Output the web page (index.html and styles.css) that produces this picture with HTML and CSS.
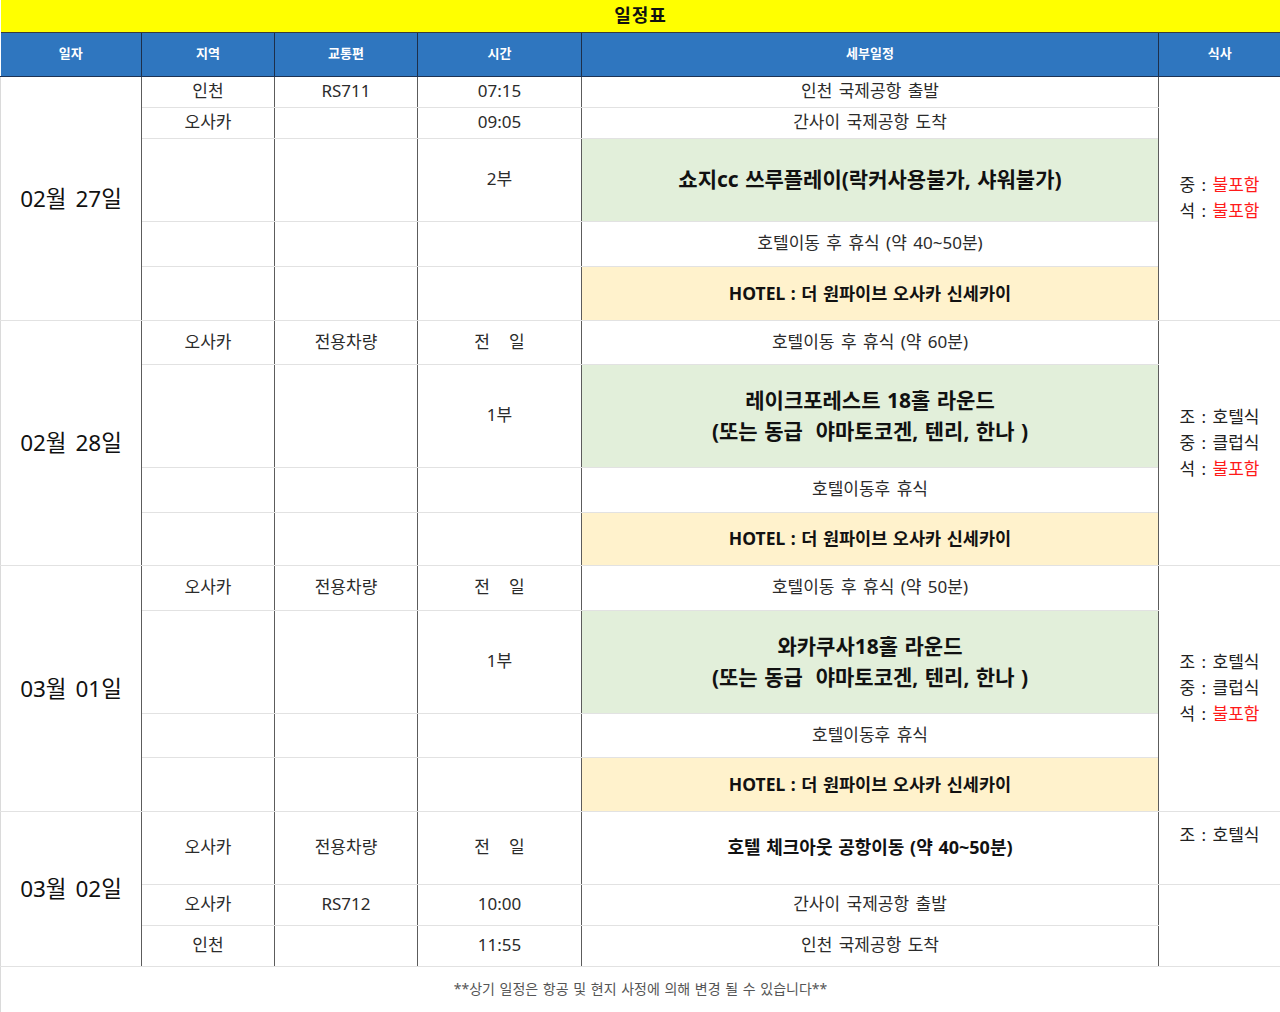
FILE: index.html
```html
<!DOCTYPE html>
<html lang="ko">
<head>
<meta charset="utf-8">
<title>일정표</title>
<link rel="stylesheet" href="styles.css">
</head>
<body>
<table class="sched">
  <colgroup>
    <col class="w-date"><col class="w-region"><col class="w-trans"><col class="w-time"><col class="w-detail"><col class="w-meal">
  </colgroup>
  <thead>
    <tr class="h-title"><th colspan="6" class="title">일정표</th></tr>
    <tr class="h-head">
      <th>일자</th><th>지역</th><th>교통편</th><th>시간</th><th>세부일정</th><th>식사</th>
    </tr>
  </thead>
  <tbody>
    <!-- 02/27 -->
    <tr class="blk h31">
      <td rowspan="5" class="date">02월 27일</td>
      <td>인천</td><td>RS711</td><td>07:15</td><td>인천 국제공항 출발</td>
      <td rowspan="5" class="meal">중 : <span class="red">불포함</span><br>석 : <span class="red">불포함</span></td>
    </tr>
    <tr class="h31"><td>오사카</td><td></td><td>09:05</td><td>간사이 국제공항 도착</td></tr>
    <tr class="h83"><td></td><td></td><td>2부</td><td class="green big">쇼지cc 쓰루플레이(락커사용불가, 샤워불가)</td></tr>
    <tr class="h45"><td></td><td></td><td></td><td>호텔이동 후 휴식 (약 40~50분)</td></tr>
    <tr class="h54"><td></td><td></td><td></td><td class="cream strong">HOTEL : 더 원파이브 오사카 신세카이</td></tr>

    <!-- 02/28 -->
    <tr class="blk h44">
      <td rowspan="4" class="date">02월 28일</td>
      <td>오사카</td><td>전용차량</td><td>전&nbsp;&nbsp;&nbsp;일</td><td>호텔이동 후 휴식 (약 60분)</td>
      <td rowspan="4" class="meal">조 : 호텔식<br>중 : 클럽식<br>석 : <span class="red">불포함</span></td>
    </tr>
    <tr class="h103"><td></td><td></td><td>1부</td><td class="green big two">레이크포레스트 18홀 라운드<br>(또는 동급&nbsp; 야마토코겐, 텐리, 한나 )</td></tr>
    <tr class="h45"><td></td><td></td><td></td><td>호텔이동후 휴식</td></tr>
    <tr class="h53"><td></td><td></td><td></td><td class="cream strong">HOTEL : 더 원파이브 오사카 신세카이</td></tr>

    <!-- 03/01 -->
    <tr class="blk h45">
      <td rowspan="4" class="date">03월 01일</td>
      <td>오사카</td><td>전용차량</td><td>전&nbsp;&nbsp;&nbsp;일</td><td>호텔이동 후 휴식 (약 50분)</td>
      <td rowspan="4" class="meal">조 : 호텔식<br>중 : 클럽식<br>석 : <span class="red">불포함</span></td>
    </tr>
    <tr class="h103"><td></td><td></td><td>1부</td><td class="green big two">와카쿠사18홀 라운드<br>(또는 동급&nbsp; 야마토코겐, 텐리, 한나 )</td></tr>
    <tr class="h44"><td></td><td></td><td></td><td>호텔이동후 휴식</td></tr>
    <tr class="h54"><td></td><td></td><td></td><td class="cream strong">HOTEL : 더 원파이브 오사카 신세카이</td></tr>

    <!-- 03/02 -->
    <tr class="blk h73">
      <td rowspan="3" class="date">03월 02일</td>
      <td>오사카</td><td>전용차량</td><td>전&nbsp;&nbsp;&nbsp;일</td><td class="strong lg">호텔 체크아웃 공항이동 (약 40~50분)</td>
      <td class="meal top">조 : 호텔식</td>
    </tr>
    <tr class="h41"><td>오사카</td><td>RS712</td><td>10:00</td><td>간사이 국제공항 출발</td><td rowspan="2" class="meal"></td></tr>
    <tr class="h41"><td>인천</td><td></td><td>11:55</td><td>인천 국제공항 도착</td></tr>

    <tr class="blk h46"><td colspan="6" class="note">**상기 일정은 항공 및 현지 사정에 의해 변경 될 수 있습니다**</td></tr>
  </tbody>
</table>
</body>
</html>
```

FILE: styles.css
```css
html, body {
  margin: 0;
  padding: 0;
  background: #ffffff;
}

body {
  font-family: "Noto Sans", "Noto Sans CJK KR", sans-serif;
  color: #2b2b2b;
}

.sched {
  width: 1280px;
  table-layout: fixed;
  border-collapse: collapse;
  font-size: 17px;
  word-spacing: 2px;
}

.w-date { width: 141px; }
.w-region { width: 133px; }
.w-trans { width: 143px; }
.w-time { width: 164px; }
.w-detail { width: 577px; }
.w-meal { width: 122px; }

.sched th,
.sched td {
  padding: 0;
  text-align: center;
  vertical-align: middle;
  line-height: 1.2;
}

.sched td {
  border-top: 1px solid #e2e2e2;
  border-bottom: 1px solid #e2e2e2;
  border-left: 1px solid #5c5c5c;
  border-right: 1px solid #5c5c5c;
}

.sched td.date {
  border-left: 1px solid #dadada;
}

.h-title { height: 32px; }
.sched th.title {
  background: #ffff00;
  font-size: 18px;
  font-weight: 700;
  color: #111;
  letter-spacing: 1px;
  border-bottom: 1px solid #3a3a3a;
}

.h-head { height: 44px; }
.h-head th {
  background: #2f76bf;
  color: #ffffff;
  font-size: 13px;
  font-weight: 700;
  border-left: 1px solid #1d2f4a;
  border-right: 1px solid #1d2f4a;
  border-bottom: 1px solid #1d3355;
}
.h-head th:first-child { border-left: none; }
.h-head th:last-child { border-right: none; }

.sched tr.blk > td {
  border-top: 1px solid #555555;
}

.h31 { height: 31px; }
.h41 { height: 41px; }
.h44 { height: 44px; }
.h45 { height: 45px; }
.h46 { height: 46px; }
.h53 { height: 53px; }
.h54 { height: 54px; }
.h73 { height: 73px; }
.h83 { height: 83px; }
.h103 { height: 103px; }

.sched td.date {
  font-size: 22.5px;
  color: #111;
  word-spacing: 3px;
}

.green { background: #e2efda; }
.cream { background: #fff2cc; }

.sched td.big {
  font-size: 21px;
  font-weight: 700;
  color: #111;
  word-spacing: 1px;
}
.sched td.big.two { line-height: 31px; }

.sched td.strong {
  font-size: 17.5px;
  font-weight: 700;
  color: #111;
  word-spacing: 1px;
}
.sched td.strong.lg {
  font-size: 18px;
}

.sched td.meal {
  line-height: 26px;
  color: #222;
  font-size: 17px;
  word-spacing: 2px;
}
.sched td.meal.top {
  vertical-align: top;
  padding-top: 10px;
}
.red { color: #ff1a1a; }

.sched td.note {
  font-size: 14px;
  color: #555;
  word-spacing: 1px;
  border-left: 1px solid #dadada;
  border-right: 1px solid #444;
  border-bottom: 1px solid #444;
}
```
